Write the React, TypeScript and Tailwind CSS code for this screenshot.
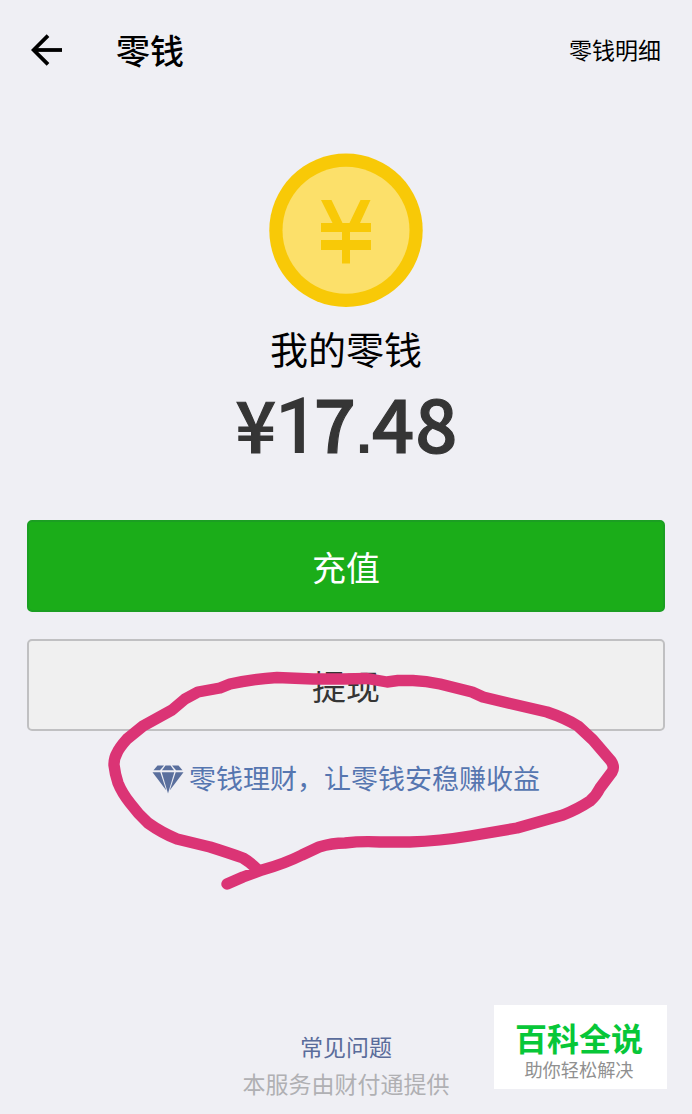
import type { ReactNode } from "react";
import clsx from "clsx";

function BackArrow() {
  return (
    <svg width="32" height="32" viewBox="0 0 32 32" fill="none" stroke="#000" strokeWidth="3.8">
      <path d="M2.6 16H31" />
      <path d="M17 1.6L2.6 16L17 30.4" />
    </svg>
  );
}

function CoinIcon() {
  return (
    <svg width="154" height="154" viewBox="0 0 154 154" className="block">
      <circle cx="77" cy="77.3" r="76.7" fill="#f8c907" />
      <circle cx="77" cy="77.3" r="63.5" fill="#fce06a" />
      <g fill="#f8c907">
        <path d="M52 47H62.500L73.500 70H80.500L91.500 47H101.500L91 70H102V79H81v8h21v10H81v13.500H73V97H52V87h21v-8H52V70H63.500z" />
      </g>
    </svg>
  );
}

function DiamondIcon() {
  return (
    <svg width="32" height="32" viewBox="0 0 32 32" fill="#5a6f9d" className="block">
      <path d="M5.500 3.500H12L8 8.200H1.500z" />
      <path d="M13.500 3.500H18.500L22 8.200H10z" />
      <path d="M20 3.500H26.500L30.500 8.200H24z" />
      <path d="M0.500 10.200H8.300L14.300 28.500z" />
      <path d="M9.700 10.200H22.300L16 31.500z" />
      <path d="M23.700 10.200H31.500L17.700 28.500z" />
    </svg>
  );
}

function ActionButton({ primary, children }: { primary?: boolean; children: ReactNode }) {
  return (
    <button
      type="button"
      className={clsx(
        "flex h-[92px] w-full items-center justify-center rounded-[5px] border-2 pt-[2px] text-[34px] leading-none",
        primary
          ? "border-[#1b9f22] bg-[#1bad19] text-white"
          : "border-[#c0c0c2] bg-[#f0f0f0] text-[#353535]",
      )}
    >
      {children}
    </button>
  );
}

// Freehand loop around the promo link
function MarkerLoop() {
  return (
    <svg
      className="pointer-events-none absolute left-0 top-0"
      width="692"
      height="1114"
      viewBox="0 0 692 1114"
      fill="none"
      stroke="#db3475"
      strokeWidth="11.4"
      strokeLinecap="round"
      strokeLinejoin="round"
    >
      <path d="M227 884L243 877L262 870Q284 864 302 855L319 847Q332 843 345 843Q362 841 380 842H410Q440 841 470 836L517 828L563 815Q578 809 590 801Q596 796 600 788L612 772Q615 767 611 761L593 740L578 726Q565 718 547 712L508 703L483 697L472 692L440 684Q426 681 413 680.500H398L387 682L367 678.500L343 679L313 679L277 677.500Q252 679 230 684L220 688L198 692L185 699L172 710L143 726L127 739Q119 748 117 753Q114 758 114 765Q115 774 118 783Q122 793 130 803Q138 814 148 823Q162 833 177 839L210 847Q229 853 243 858Q250 862 257 869" />
    </svg>
  );
}

export default function App() {
  return (
    <div className="relative flex h-[1114px] w-[692px] flex-col overflow-hidden bg-[#efeff4] font-['Noto_Sans_CJK_SC',sans-serif] text-black">
      <header className="flex h-[100px] items-center pl-[31px] pr-[31px]">
        <BackArrow />
        <h1 className="ml-[53px] text-[34px] font-medium leading-none">零钱</h1>
        <span className="ml-auto pb-[2px] text-[23px] leading-none">零钱明细</span>
      </header>

      <main className="flex flex-col items-center px-[27px] pt-[53px]">
        <CoinIcon />
        <p className="mt-[20px] text-[38px] leading-[42px]">我的零钱</p>
        <p className="mt-[14px] flex h-[76px] items-baseline pl-[2px] text-[74px] font-medium leading-[76px] text-[#353535] [-webkit-text-stroke:1.2px_#353535]">
          <span className="text-[71px]">¥</span>
          <span className="-ml-[1px] font-['Roboto',sans-serif] text-[77px] tracking-[-4px] [-webkit-text-stroke:0px]">1</span>
          <span className="-ml-[1px]">7</span>
          <span className="font-['Liberation_Sans',sans-serif] text-[58px] font-bold [-webkit-text-stroke:0px]">.</span>
          <span className="tracking-[1px]">48</span>
        </p>

        <div className="mt-[61px] flex w-full flex-col gap-[27px]">
          <ActionButton primary>充值</ActionButton>
          <ActionButton>提现</ActionButton>
        </div>

        <a className="mt-[30px] flex items-center gap-[5px] text-[27px] leading-[34px] text-[#5676b0]">
          <DiamondIcon />
          零钱理财，让零钱安稳赚收益
        </a>
      </main>

      <footer className="mt-auto flex flex-col items-center pb-[14px]">
        <a className="text-[23px] leading-[34px] text-[#5a6c9b]">常见问题</a>
        <p className="mt-[3px] text-[23px] leading-[34px] text-[#b0b0b3]">本服务由财付通提供</p>
      </footer>

      <MarkerLoop />

      <div className="absolute left-[494px] top-[1005px] flex h-[84px] w-[173px] flex-col items-center bg-white pr-[3px] pt-[14px]">
        <span className="text-[32px] font-bold leading-[36px] text-[#07c738]">百科全说</span>
        <span className="mt-[3px] text-[18.200px] leading-[22px] text-[#909090]">助你轻松解决</span>
      </div>
    </div>
  );
}
